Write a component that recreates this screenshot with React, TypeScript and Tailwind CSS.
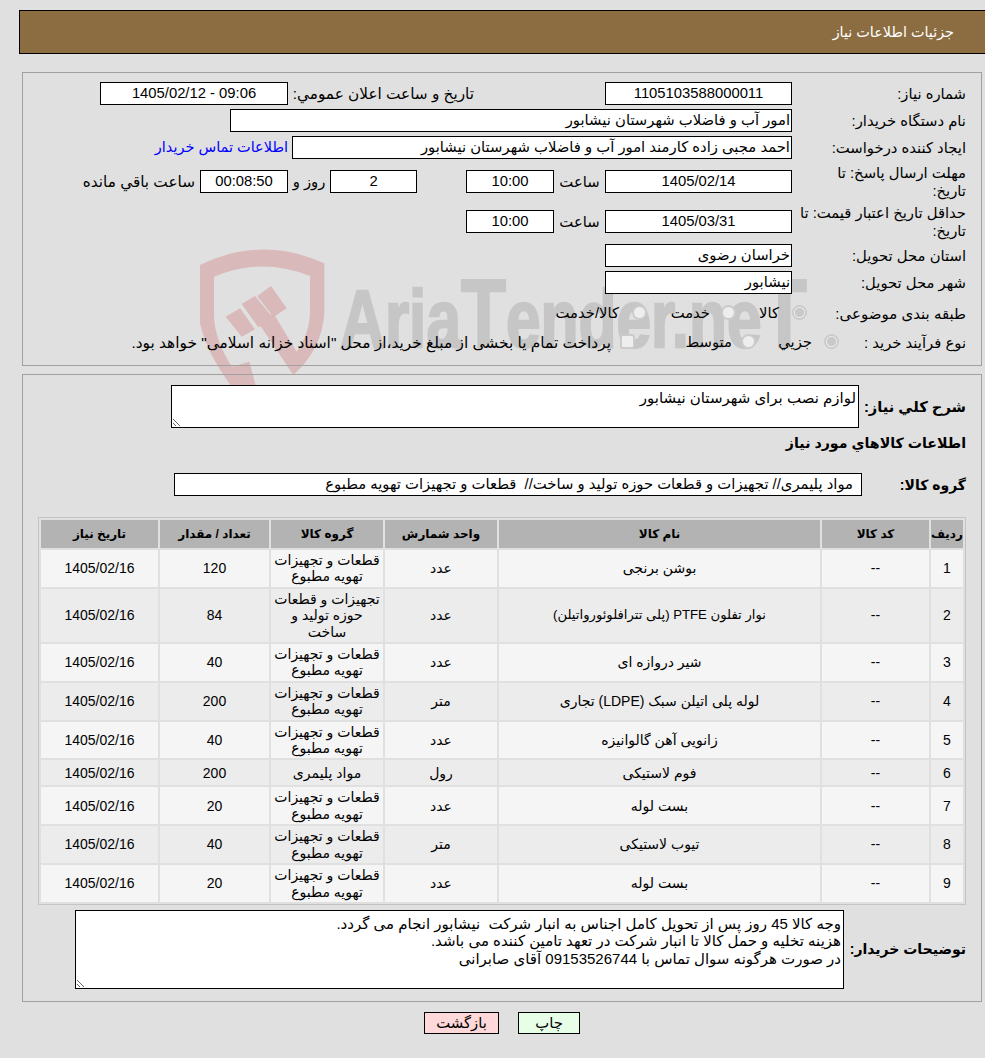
const GROUP_A = "قطعات و تجهیزات\nتهویه مطبوع";

const rows = [
  { id: 1, name: "بوشن برنجی", unit: "عدد", group: GROUP_A, qty: "120" },
  { id: 2, name: "نوار تفلون PTFE (پلی تترافلوئورواتیلن)", unit: "عدد", group: "تجهیزات و قطعات\nحوزه تولید و\nساخت", qty: "84", nameClass: "text-[13.2px]" },
  { id: 3, name: "شیر دروازه ای", unit: "عدد", group: GROUP_A, qty: "40" },
  { id: 4, name: "لوله پلی اتیلن سبک (LDPE) تجاری", unit: "متر", group: GROUP_A, qty: "200" },
  { id: 5, name: "زانویی آهن گالوانیزه", unit: "عدد", group: GROUP_A, qty: "40" },
  { id: 6, name: "فوم لاستیکی", unit: "رول", group: "مواد پلیمری", qty: "200" },
  { id: 7, name: "بست لوله", unit: "عدد", group: GROUP_A, qty: "20" },
  { id: 8, name: "تیوب لاستیکی", unit: "متر", group: GROUP_A, qty: "40" },
  { id: 9, name: "بست لوله", unit: "عدد", group: GROUP_A, qty: "20" },
];

const notes =
  "وجه کالا 45 روز پس از تحویل کامل اجناس به انبار شرکت  نیشابور انجام می گردد.\nهزینه تخلیه و حمل کالا تا انبار شرکت در تعهد تامین کننده می باشد.\nدر صورت هرگونه سوال تماس با 09153526744 آقای صابرانی";

function Box({ className = "", children }: { className?: string; children: React.ReactNode }) {
  return (
    <div className={`h-[23px] shrink-0 border border-black bg-white leading-[21px] whitespace-pre overflow-hidden ${className}`}>
      {children}
    </div>
  );
}

function Label({ className = "", children }: { className?: string; children: React.ReactNode }) {
  return <div className={`shrink-0 whitespace-nowrap leading-[18px] ${className}`}>{children}</div>;
}

function Radio({ checked = false }: { checked?: boolean }) {
  return (
    <input
      type="radio"
      disabled
      checked={checked}
      readOnly
      className={`-mx-px -mt-[3px] block h-[15px] w-[15px] shrink-0 appearance-none rounded-full border-2 border-[#cbcbcb] ${
        checked ? "bg-[radial-gradient(circle,#c9c9c9_55%,#eeeeee_62%)]" : "bg-[#eeeeee]"
      }`}
    />
  );
}

function Watermark() {
  return (
    <svg className="absolute left-[190px] top-[240px] w-[640px] h-[150px]" viewBox="0 0 1920 450" aria-hidden="true">
      <path
        fill="#d9b9ba"
        d="M30 75 Q215 -15 403 70 L403 220 Q395 330 310 405 L205 248 L250 220 L320 335 Q360 280 360 210 L360 108 Q215 50 72 110 L72 230 Q75 300 125 380 L178 365 L198 440 L125 440 Q50 340 30 250 Z"
      />
      <path fill="#d9b9ba" d="M107 230 L150 205 L195 268 L155 290 Z" />
      <path fill="#d9b9ba" d="M155 192 L195 168 L250 235 L205 262 Z" />
      <path fill="#d9b9ba" d="M202 168 L243 138 L290 205 L250 232 Z" />
      <text
        x="450"
        y="320"
        direction="ltr"
        fill="#c6c6c6"
        stroke="#c6c6c6"
        strokeWidth="7"
        fontFamily="Liberation Sans, sans-serif"
        fontWeight="700"
        fontSize="245"
        textLength="1400"
        lengthAdjust="spacingAndGlyphs"
        className="[unicode-bidi:embed]"
      >
        Aria<tspan fontSize="290">T</tspan>ender.ne<tspan fontSize="290">T</tspan>
      </text>
    </svg>
  );
}

export default function App() {
  return (
    <div dir="rtl" className="relative min-h-screen overflow-hidden bg-[#e0e0e0] text-[14.8px] text-black font-['Liberation_Sans','DejaVu_Sans',sans-serif]">
      <Watermark />
      <div className="relative pt-[10px]">
        <div className="ml-[19px] h-[44px] border border-r-0 border-black bg-[#8c6d41] pr-[31px] text-[14.4px] leading-[42px] text-white">
          جزئیات اطلاعات نیاز
        </div>

        <section className="ml-[22px] mr-[3px] mt-[18px] border border-[#a0a0a0] pr-[15px] pt-[9px] pb-[11px]">
          <div className="flex h-[23px] items-center">
            <Label className="w-[174px]">شماره نیاز:</Label>
            <Box className="w-[187px] text-center">1105103588000011</Box>
            <Label className="mr-[131px] w-[186px] text-[15.3px]">تاریخ و ساعت اعلان عمومي:</Label>
            <Box className="w-[188px] text-center">09:06 - 1405/02/12</Box>
          </div>
          <div className="mt-[4px] flex h-[23px] items-center">
            <Label className="w-[174px]">نام دستگاه خریدار:</Label>
            <Box className="w-[562px] pr-[1px]">امور آب و فاضلاب شهرستان نیشابور</Box>
          </div>
          <div className="mt-[4px] flex h-[23px] items-center">
            <Label className="w-[174px]">ایجاد کننده درخواست:</Label>
            <Box className="w-[500px] pr-[1px]">احمد مجبی زاده کارمند امور آب و فاضلاب شهرستان نیشابور</Box>
            <a className="mr-[4px] text-[14.5px] text-[#0000ff] whitespace-nowrap">اطلاعات تماس خریدار</a>
          </div>
          <div className="mt-[11px] flex h-[23px] items-center">
            <Label className="w-[174px]">
              مهلت ارسال پاسخ: تا
              <br />
              تاریخ:
            </Label>
            <Box className="w-[187px] text-center">1405/02/14</Box>
            <Label className="w-[51px] text-center">ساعت</Label>
            <Box className="w-[88px] text-center">10:00</Box>
            <Box className="mr-[49px] w-[87px] text-center">2</Box>
            <Label className="w-[42px] text-center">روز و</Label>
            <Box className="w-[88px] bg-[#ffffe6] text-center">00:08:50</Box>
            <Label className="mr-[5px] text-[15.3px]">ساعت باقي مانده</Label>
          </div>
          <div className="mt-[17px] flex h-[23px] items-center">
            <Label className="w-[174px]">
              حداقل تاریخ اعتبار قیمت: تا
              <br />
              تاریخ:
            </Label>
            <Box className="w-[187px] text-center">1405/03/31</Box>
            <Label className="w-[51px] text-center">ساعت</Label>
            <Box className="w-[88px] text-center">10:00</Box>
          </div>
          <div className="mt-[11px] flex h-[23px] items-center">
            <Label className="w-[174px]">استان محل تحویل:</Label>
            <Box className="w-[187px] pr-[1px]">خراسان رضوی</Box>
          </div>
          <div className="mt-[4px] flex h-[23px] items-center">
            <Label className="w-[174px]">شهر محل تحویل:</Label>
            <Box className="w-[187px] pr-[1px]">نیشابور</Box>
          </div>
          <div className="mt-[8px] flex h-[23px] items-center">
            <Label className="w-[160px] text-[15px]">طبقه بندی موضوعی:</Label>
            <div className="flex w-[71px] items-center">
              <Radio checked />
              <span className="mr-[14px]">کالا</span>
            </div>
            <div className="flex w-[89px] items-center">
              <Radio />
              <span className="mr-[12px]">خدمت</span>
            </div>
            <div className="flex items-center">
              <Radio />
              <span className="mr-[14px]">کالا/خدمت</span>
            </div>
          </div>
          <div className="mt-[6px] flex h-[23px] items-center">
            <Label className="w-[128px]">نوع فرآیند خرید :</Label>
            <div className="flex w-[83px] items-center">
              <Radio checked />
              <span className="mr-[13px]">جزيي</span>
            </div>
            <div className="flex w-[121px] items-center">
              <Radio />
              <span className="mr-[10px]">متوسط</span>
            </div>
            <div className="flex items-center">
              <input
                type="checkbox"
                disabled
                className="-mx-px -mt-[3px] block h-[15px] w-[15px] shrink-0 appearance-none rounded-[3px] border-2 border-[#cbcbcb] bg-[#eeeeee]"
              />
              <span className="mr-[10px] whitespace-nowrap text-[15.4px]">پرداخت تمام یا بخشی از مبلغ خرید،از محل "اسناد خزانه اسلامی" خواهد بود.</span>
            </div>
          </div>
        </section>

        <section className="ml-[22px] mr-[3px] mt-[8px] border border-[#a0a0a0] pr-[15px] pt-[10px] pb-[12px]">
          <div className="flex items-center">
            <Label className="w-[107px] font-bold text-[14.7px]">شرح کلي نياز:</Label>
            <textarea
              readOnly
              value="لوازم نصب برای شهرستان نیشابور"
              className="block h-[43px] w-[688px] border border-black bg-white px-[2px] pt-[3px] text-[15px] leading-[18px] outline-none"
            />
          </div>
          <div className="mt-[5px] h-[20px] font-bold text-[14.2px] leading-[20px]">اطلاعات کالاهاي مورد نياز</div>
          <div className="mt-[20px] flex h-[23px] items-center">
            <Label className="w-[104px] font-bold text-[14px]">گروه کالا:</Label>
            <Box className="w-[688px] pr-[8px]">مواد پلیمری// تجهیزات و قطعات حوزه تولید و ساخت//  قطعات و تجهیزات تهویه مطبوع</Box>
          </div>

          <table className="mt-[21px] ml-[1px] w-[928px] table-fixed border-separate border-spacing-[2px] border border-[#c4c4c4] text-center text-[14px]">
            <colgroup>
              <col className="w-[32px]" />
              <col className="w-[107px]" />
              <col className="w-[321px]" />
              <col className="w-[112px]" />
              <col className="w-[112px]" />
              <col className="w-[109px]" />
              <col className="w-[117px]" />
            </colgroup>
            <thead>
              <tr className="h-[28px] bg-[#b3b3b3] text-[12px] font-bold">
                <th>ردیف</th>
                <th>کد کالا</th>
                <th>نام کالا</th>
                <th>واحد شمارش</th>
                <th>گروه کالا</th>
                <th>تعداد / مقدار</th>
                <th>تاریخ نیاز</th>
              </tr>
            </thead>
            <tbody className="leading-[16.4px]">
              {rows.map((r) => (
                <tr key={r.id} className={`h-[25px] ${r.id % 2 === 1 ? "bg-[#f5f5f5]" : "bg-[#ececec]"}`}>
                  <td>{r.id}</td>
                  <td>--</td>
                  <td className={r.nameClass}>{r.name}</td>
                  <td>{r.unit}</td>
                  <td className="py-[2px] whitespace-pre-line">{r.group}</td>
                  <td>{r.qty}</td>
                  <td>1405/02/16</td>
                </tr>
              ))}
            </tbody>
          </table>

          <div className="mt-[5px] flex items-center">
            <Label className="w-[122px] font-bold text-[14px]">توضیحات خریدار:</Label>
            <textarea
              readOnly
              value={notes}
              className="block h-[79px] w-[769px] border border-black bg-white px-[2px] pt-[4px] text-[15px] leading-[17.5px] outline-none"
            />
          </div>
        </section>

        <div className="mt-[10px] flex justify-center gap-[19px] pl-[19px]">
          <button type="button" className="h-[22px] w-[62px] border border-black bg-[#e6ffe6] leading-[20px]">چاپ</button>
          <button type="button" className="h-[22px] w-[75px] border border-black bg-[#ffd9d9] leading-[20px]">بازگشت</button>
        </div>
      </div>
    </div>
  );
}
